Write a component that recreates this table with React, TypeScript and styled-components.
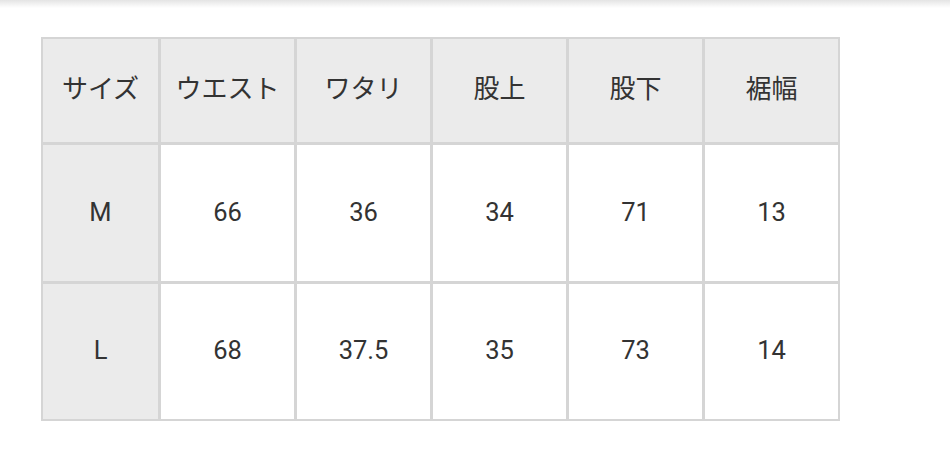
import React from "react";
import styled, { createGlobalStyle } from "styled-components";

const Global = createGlobalStyle`
  html, body { margin: 0; padding: 0; background: #fff; }
  body { font-family: Roboto, "Noto Sans CJK JP", sans-serif; }
`;

const Page = styled.div`
  position: relative;
  width: 950px;
  height: 467px;
  padding: 37px 0 0 41px;
  box-sizing: border-box;
`;

const TopShadow = styled.div`
  position: absolute;
  left: 0;
  right: 0;
  top: 0;
  height: 8px;
  background: linear-gradient(#e4e4e4, rgba(255, 255, 255, 0));
`;

const Table = styled.div`
  display: grid;
  grid-template-columns: 115px repeat(5, 133px);
  grid-template-rows: 103px 136px 135px;
  gap: 3px;
  padding: 2px;
  width: max-content;
  background: #d5d5d5;
`;

const Cell = styled.div<{ $head?: boolean; $title?: boolean }>`
  display: flex;
  align-items: center;
  justify-content: center;
  padding-bottom: ${(p) => (p.$title ? "3px" : "1px")};
  box-sizing: border-box;
  background: ${(p) => (p.$head ? "#ebebeb" : "#ffffff")};
  color: #333333;
  font-family: Roboto, "Noto Sans CJK JP", sans-serif;
  font-size: ${(p) => (p.$title ? "26px" : "25.5px")};
  line-height: 1;
`;

const headers = ["サイズ", "ウエスト", "ワタリ", "股上", "股下", "裾幅"];
const rows = [
  ["M", "66", "36", "34", "71", "13"],
  ["L", "68", "37.5", "35", "73", "14"],
];

export default function App() {
  return (
    <>
      <Global />
      <Page>
        <TopShadow />
        <Table>
          {headers.map((h) => (
            <Cell key={h} $head $title>
              {h}
            </Cell>
          ))}
          {rows.map((r) =>
            r.map((v, i) => (
              <Cell key={r[0] + i} $head={i === 0}>
                {v}
              </Cell>
            ))
          )}
        </Table>
      </Page>
    </>
  );
}
